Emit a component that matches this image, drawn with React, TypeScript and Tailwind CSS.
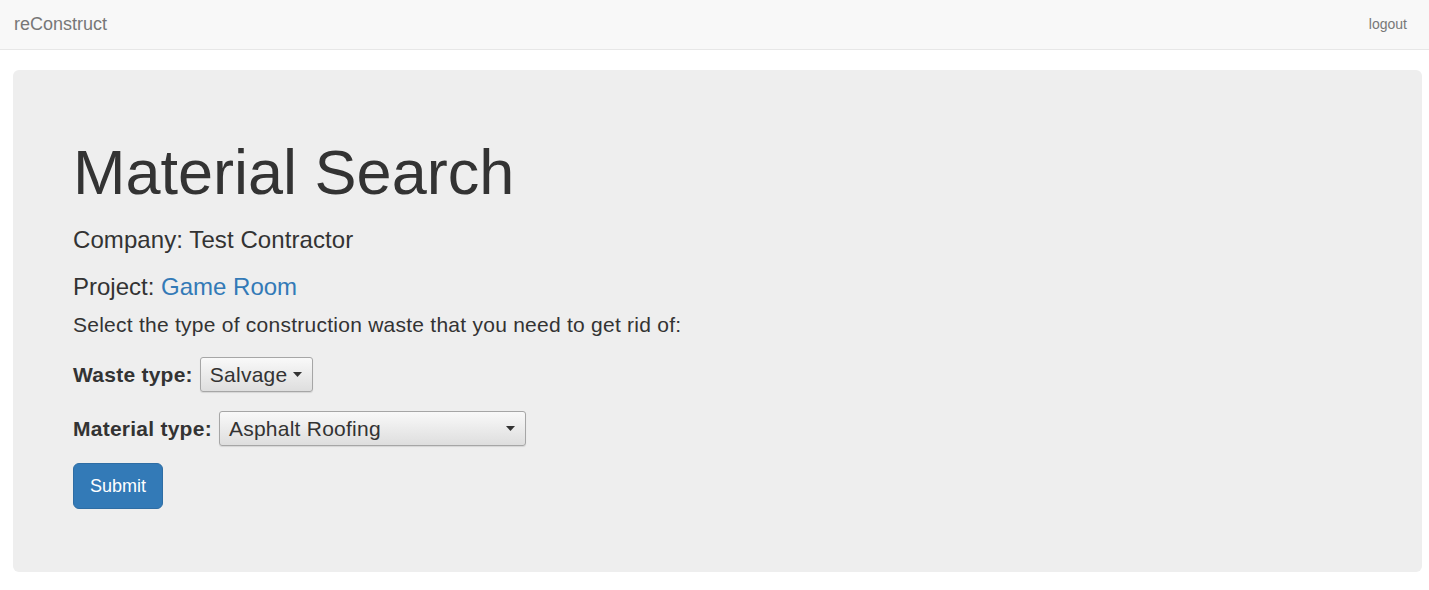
export default function App() {
  return (
    <div className="min-h-[590px] bg-white font-['Liberation_Sans',Arial,sans-serif] text-[#333]">
      <nav className="flex h-[50px] items-center justify-between border-b border-[#e7e7e7] bg-[#f8f8f8] pl-[14px] pr-[22px]">
        <a className="text-[18px] text-[#777]">reConstruct</a>
        <a className="text-[14px] text-[#777]">logout</a>
      </nav>

      <main className="ml-[13px] mr-[7px] mt-[20px] rounded-[6px] bg-[#eee] px-[60px] pb-[63px] pt-[48px]">
        <h1 className="mt-[20px] text-[63px] leading-[1.1]">Material Search</h1>
        <h3 className="mt-[20px] text-[24px] leading-[1.1] tracking-[0.08px]">Company: Test Contractor</h3>
        <h3 className="mt-[20px] text-[24px] leading-[1.1]">
          Project: <a className="text-[#337ab7]">Game Room</a>
        </h3>
        <p className="mt-[10px] text-[21px] leading-[30px] tracking-[0.25px]">
          Select the type of construction waste that you need to get rid of:
        </p>

        <div className="mt-[15px] flex h-[39px] items-center gap-[7px]">
          <label className="text-[21px] font-bold tracking-[0.25px]">Waste type:</label>
          <FakeSelect value="Salvage" width="w-[113px]" />
        </div>
        <div className="mt-[15px] flex h-[39px] items-center gap-[7px]">
          <label className="text-[21px] font-bold tracking-[0.25px]">Material type:</label>
          <FakeSelect value="Asphalt Roofing" width="w-[307px]" />
        </div>

        <button className="mt-[15px] h-[46px] rounded-[6px] border border-[#2e6da4] bg-[#337ab7] px-[16px] text-[18px] text-white">
          Submit
        </button>
      </main>
    </div>
  );
}

function FakeSelect({ value, width }: { value: string; width: string }) {
  return (
    <div
      className={`flex h-[35px] ${width} items-center justify-between rounded-[3px] border border-[#a6a6a6] bg-gradient-to-b from-[#f9f9f9] to-[#dedede] pl-[9px] pr-[10px] text-[21px] tracking-[0.25px] shadow-[0_1px_1px_rgba(0,0,0,0.1)]`}
    >
      <span>{value}</span>
      <svg width="9" height="5" viewBox="0 0 9 5">
        <path d="M0 0h9L4.5 5z" fill="#333" />
      </svg>
    </div>
  );
}
